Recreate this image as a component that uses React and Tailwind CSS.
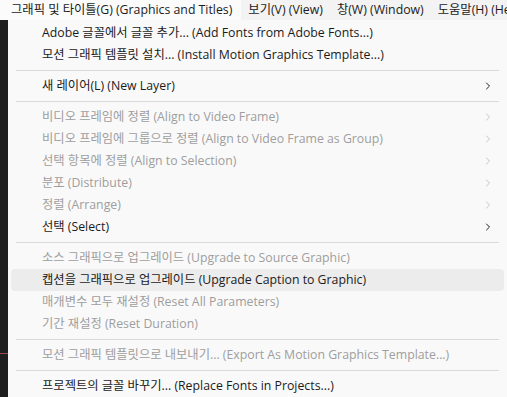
import { ChevronRight } from "lucide-react";

const font = { fontFamily: '"Open Sans", "Noto Sans CJK KR", sans-serif' };

const Sep = () => <div className="mx-[5px] my-[4px] h-px bg-[#d9d9d9]" />;

const Item = ({ label, disabled, sub, active }) => (
  <div
    className={
      "flex h-[22px] items-center justify-between rounded-[4px] pl-[31px] pr-[10px] " +
      (active ? "bg-[#ececec] " : "") +
      (disabled ? "text-[#9e9e9e]" : "text-[#1b1b1b]")
    }
  >
    <span className="whitespace-nowrap">{label}</span>
    {sub && (
      <ChevronRight
        size={12}
        strokeWidth={disabled ? 1.3 : 2}
        className={disabled ? "text-[#a8a8a8]" : "text-[#222]"}
      />
    )}
  </div>
);

export default function App() {
  return (
    <div className="h-[397px] w-[507px] overflow-hidden bg-[#1e1e1e] text-[12.3px]" style={font}>
      {/* top menu bar */}
      <div className="flex h-[20px] items-center overflow-hidden whitespace-nowrap bg-[#f3f3f3] text-[#1b1b1b]">
        <div className="flex h-full shrink-0 items-center bg-[#fbfbfb] pl-[11px] pr-[9px]">그래픽 및 타이틀(G) (Graphics and Titles)</div>
        <div className="shrink-0 px-[7px]">보기(V) (View)</div>
        <div className="shrink-0 px-[7px]">창(W) (Window)</div>
        <div className="shrink-0 px-[7px]">도움말(H) (Help)</div>
      </div>

      <div className="flex h-[377px]">
        {/* app content peeking behind the menu */}
        <div className="relative w-[8px] shrink-0 bg-[#1e1e1e]">
          <div className="absolute left-0 top-[333px] h-px w-[8px] bg-[#a04848]" />
        </div>

        {/* dropdown */}
        <div className="flex-1 bg-[#f9f9f9] px-[3px] pt-[2px]">
          <Item label="Adobe 글꼴에서 글꼴 추가... (Add Fonts from Adobe Fonts...)" />
          <Item label="모션 그래픽 템플릿 설치... (Install Motion Graphics Template...)" />
          <Sep />
          <Item label="새 레이어(L) (New Layer)" sub />
          <Sep />
          <Item label="비디오 프레임에 정렬 (Align to Video Frame)" disabled sub />
          <Item label="비디오 프레임에 그룹으로 정렬 (Align to Video Frame as Group)" disabled sub />
          <Item label="선택 항목에 정렬 (Align to Selection)" disabled sub />
          <Item label="분포 (Distribute)" disabled sub />
          <Item label="정렬 (Arrange)" disabled sub />
          <Item label="선택 (Select)" sub />
          <Sep />
          <Item label="소스 그래픽으로 업그레이드 (Upgrade to Source Graphic)" disabled />
          <Item label="캡션을 그래픽으로 업그레이드 (Upgrade Caption to Graphic)" active />
          <Item label="매개변수 모두 재설정  (Reset All Parameters)" disabled />
          <Item label="기간 재설정 (Reset Duration)" disabled />
          <Sep />
          <Item label="모션 그래픽 템플릿으로 내보내기... (Export As Motion Graphics Template...)" disabled />
          <Sep />
          <Item label="프로젝트의 글꼴 바꾸기... (Replace Fonts in Projects...)" />
        </div>
      </div>
    </div>
  );
}
